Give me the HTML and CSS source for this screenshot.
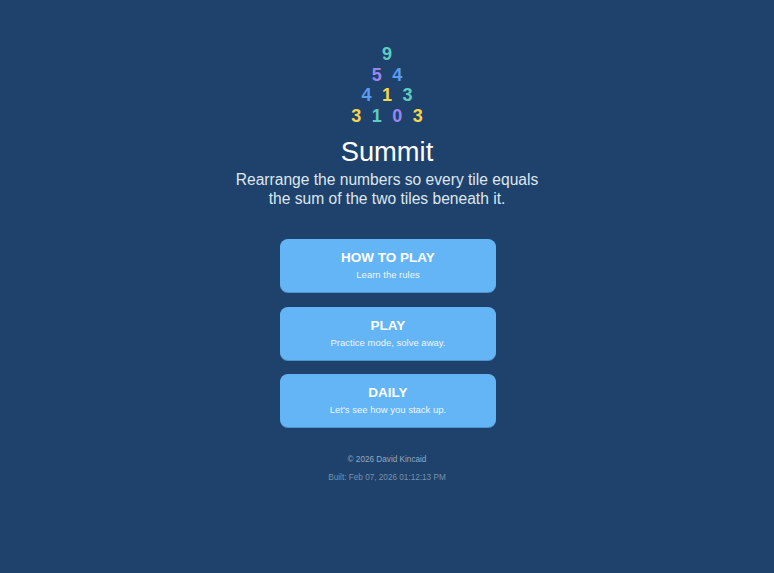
FILE: index.html
```html
<!DOCTYPE html>
<html>
<head>
<meta charset="utf-8">
<link rel="stylesheet" href="styles.css">
</head>
<body>
<main class="page">
  <div class="pyramid">
    <div class="row"><span class="d teal">9</span></div>
    <div class="row"><span class="d purple">5</span><span class="d blue">4</span></div>
    <div class="row"><span class="d blue">4</span><span class="d yellow">1</span><span class="d teal">3</span></div>
    <div class="row"><span class="d yellow">3</span><span class="d teal">1</span><span class="d purple">0</span><span class="d yellow">3</span></div>
  </div>
  <h1 class="title">Summit</h1>
  <p class="subtitle">Rearrange the numbers so every tile equals<br>the sum of the two tiles beneath it.</p>
  <div class="menu">
    <button class="btn"><span class="btn-title">HOW TO PLAY</span><span class="btn-sub">Learn the rules</span></button>
    <button class="btn"><span class="btn-title">PLAY</span><span class="btn-sub">Practice mode, solve away.</span></button>
    <button class="btn"><span class="btn-title">DAILY</span><span class="btn-sub">Let's see how you stack up.</span></button>
  </div>
  <footer class="footer">
    <div class="copy">© 2026 David Kincaid</div>
    <div class="built">Built: Feb 07, 2026 01:12:13 PM</div>
  </footer>
</main>
</body>
</html>
```
FILE: styles.css
```css
html, body {
  margin: 0;
  padding: 0;
  background: #1e426b;
  height: 100%;
}
body {
  font-family: "Liberation Sans", Arial, sans-serif;
  color: #ffffff;
}
.page {
  display: flex;
  flex-direction: column;
  align-items: center;
  padding-top: 44px;
}
.pyramid {
  display: flex;
  flex-direction: column;
  align-items: center;
}
.row {
  display: flex;
  justify-content: center;
  height: 20.5px;
  line-height: 20px;
}
.d {
  width: 20.5px;
  text-align: center;
  font-weight: bold;
  font-size: 18px;
}
.teal { color: #5ecdc0; }
.purple { color: #9a86ee; }
.blue { color: #5b9cf2; }
.yellow { color: #f3d54e; }
.title {
  margin: 10px 0 0;
  font-size: 27.3px;
  font-weight: normal;
  line-height: 32px;
  color: #ffffff;
}
.subtitle {
  margin: 2px 0 0;
  font-size: 15.6px;
  line-height: 19px;
  text-align: center;
  color: #dfe6ef;
}
.menu {
  margin-top: 31px;
  margin-left: 2px;
  display: flex;
  flex-direction: column;
  gap: 14.5px;
}
.btn {
  width: 216px;
  height: 53px;
  border: none;
  border-radius: 8px;
  background: #64b5f6;
  box-shadow: 0 1px 0 #4f93cc;
  display: flex;
  flex-direction: column;
  align-items: center;
  justify-content: center;
  gap: 3px;
  padding: 0;
  font-family: "Liberation Sans", Arial, sans-serif;
  color: #ffffff;
  cursor: pointer;
}
.btn-title {
  font-size: 13.5px;
  font-weight: bold;
  line-height: 16px;
}
.btn-sub {
  font-size: 9.5px;
  line-height: 12px;
  color: #eef6fd;
}
.footer {
  margin-top: 27px;
  display: flex;
  flex-direction: column;
  align-items: center;
  gap: 7px;
  font-size: 8.2px;
  line-height: 11px;
}
.copy { color: #95a8c0; }
.built { color: #7890ae; }
```
